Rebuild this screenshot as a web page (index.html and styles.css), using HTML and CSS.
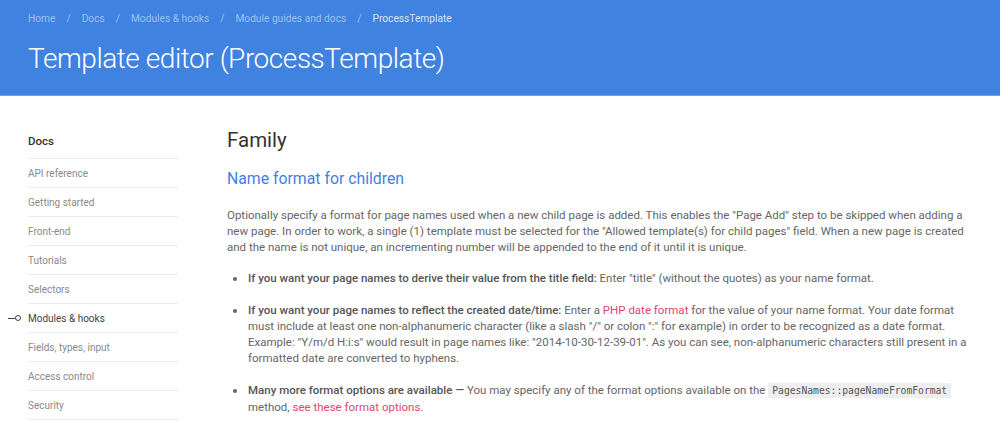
FILE: index.html
```html
<!DOCTYPE html>
<html lang="en">
<head>
<meta charset="utf-8">
<title>Template editor (ProcessTemplate)</title>
<link rel="stylesheet" href="styles.css">
</head>
<body>
<header class="hero">
  <nav class="crumbs">
    <a href="#">Home</a><span class="sep">/</span>
    <a href="#">Docs</a><span class="sep">/</span>
    <a href="#">Modules &amp; hooks</a><span class="sep">/</span>
    <a href="#">Module guides and docs</a><span class="sep">/</span>
    <span class="current">ProcessTemplate</span>
  </nav>
  <h1 class="title">Template editor (ProcessTemplate)</h1>
</header>
<div class="layout">
  <aside class="side">
    <div class="side-head">Docs</div>
    <ul class="side-list">
      <li><a href="#">API reference</a></li>
      <li><a href="#">Getting started</a></li>
      <li><a href="#">Front-end</a></li>
      <li><a href="#">Tutorials</a></li>
      <li><a href="#">Selectors</a></li>
      <li class="active"><span class="marker"><span class="mline"></span><span class="mdot"></span></span><a href="#">Modules &amp; hooks</a></li>
      <li><a href="#">Fields, types, input</a></li>
      <li><a href="#">Access control</a></li>
      <li><a href="#">Security</a></li>
    </ul>
  </aside>
  <main class="content">
    <h2 class="h2">Family</h2>
    <h3 class="h3">Name format for children</h3>
    <p class="para">Optionally specify a format for page names used when a new child page is added. This enables the "Page Add" step to be skipped when adding a new page. In order to work, a single (1) template must be selected for the "Allowed template(s) for child pages" field. When a new page is created and the name is not unique, an incrementing number will be appended to the end of it until it is unique.</p>
    <ul class="bullets">
      <li><strong>If you want your page names to derive their value from the title field:</strong> Enter "title" (without the quotes) as your name format.</li>
      <li><strong>If you want your page names to reflect the created date/time:</strong> Enter a <a class="link" href="#">PHP date format</a> for the value of your name format. Your date format must include at least one non-alphanumeric character (like a slash "/" or colon ":" for example) in order to be recognized as a date format. Example: "Y/m/d H:i:s" would result in page names like: "2014-10-30-12-39-01". As you can see, non-alphanumeric characters still present in a formatted date are converted to hyphens.</li>
      <li><strong>Many more format options are available —</strong> You may specify any of the format options available on the <code class="code">PagesNames::pageNameFromFormat</code> method, <a class="link" href="#">see these format options</a>.</li>
    </ul>
  </main>
</div>
</body>
</html>
```
FILE: styles.css
```css
* { box-sizing: border-box; }
html, body { margin: 0; padding: 0; background: #fff; }
body {
  font-family: Roboto, "Noto Sans", "Liberation Sans", sans-serif;
  color: #666;
  -webkit-font-smoothing: antialiased;
}
a { text-decoration: none; }

.hero {
  background: #3f82df;
  height: 96px;
  padding: 12px 28px 0;
  border-bottom: 1px solid #6fa2ea;
}
.crumbs {
  font-size: 10.2px;
  line-height: 14px;
  color: #9dc0f0;
  display: flex;
  align-items: center;
}
.crumbs a { color: #9dc0f0; }
.crumbs .sep { margin: 0 11px; }
.crumbs .current { color: #d6e5fa; }
.title {
  margin: 15px 0 0;
  font-size: 28px;
  line-height: 36px;
  font-weight: 300;
  letter-spacing: -0.45px;
  color: #fff;
}

.layout {
  display: flex;
  padding: 0 28px;
}
.side {
  width: 150px;
  flex: none;
  padding-top: 38px;
}
.side-head {
  font-size: 11.5px;
  font-weight: 500;
  color: #333;
  line-height: 14px;
  padding-bottom: 10px;
  border-bottom: 1px solid #ebebeb;
}
.side-list { list-style: none; margin: 0; padding: 0; }
.side-list li {
  position: relative;
  font-size: 10px;
  line-height: 14px;
  padding: 8px 0 6px;
  border-bottom: 1px solid #ebebeb;
}
.side-list a { color: #8a8a8a; }
.side-list li.active a { color: #444; }
.marker {
  position: absolute;
  left: -20px;
  top: 11px;
  display: flex;
  align-items: center;
}
.mline { width: 7px; height: 1px; background: #444; }
.mdot { width: 6px; height: 6px; border: 1px solid #444; border-radius: 50%; }

.content {
  margin-left: 49px;
  width: 748px;
  padding-top: 31px;
}
.h2 {
  margin: 0;
  font-size: 20.5px;
  line-height: 26px;
  font-weight: 400;
  color: #333;
}
.h3 {
  margin: 16px 0 0;
  font-size: 15.8px;
  line-height: 20px;
  font-weight: 400;
  color: #3f82df;
}
.para {
  margin: 18px 0 0;
  font-size: 11.5px;
  line-height: 16px;
}
.bullets {
  margin: 15px 0 0;
  padding-left: 20px;
  font-size: 11.5px;
  line-height: 16px;
}
.bullets li { margin-bottom: 16px; padding-left: 1px; }
.bullets strong { font-weight: 500; color: #555; }
.link { color: #e3456f; }
.code {
  font-family: "DejaVu Sans Mono", "Liberation Mono", monospace;
  font-size: 9.7px;
  background: #eee;
  padding: 2px 4px;
  color: #555;
}
```
